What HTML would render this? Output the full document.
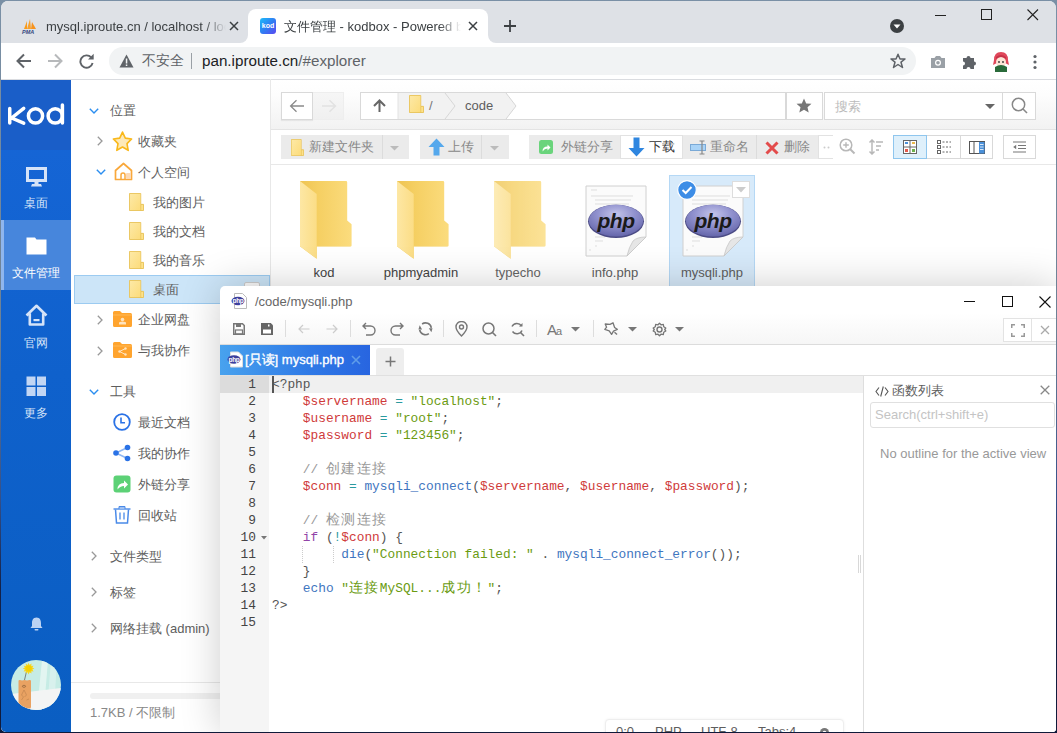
<!DOCTYPE html>
<html><head><meta charset="utf-8">
<style>
*{box-sizing:border-box;margin:0;padding:0}
html,body{width:1057px;height:733px;overflow:hidden;background:linear-gradient(#7a90a6,#6d8195 45%,#34508a 68%,#14224a 80%,#101a3a 100%)}
body{font-family:"Liberation Sans",sans-serif;position:relative;color:#333}
.abs{position:absolute}
#win{position:absolute;left:1px;top:1px;width:1055px;height:731px;background:#fff;border-radius:7px 7px 4px 5px;overflow:hidden}
#tabstrip{position:absolute;left:0;top:0;width:1055px;height:42px;background:#dee1e6}
.tab{position:absolute;top:8px;height:34px;font-size:13px;color:#3c4043;white-space:nowrap}
.fade{-webkit-mask-image:linear-gradient(90deg,#000 calc(100% - 22px),transparent 100%);mask-image:linear-gradient(90deg,#000 calc(100% - 22px),transparent 100%)}
#tab2{left:247px;width:240px;background:#fff;border-radius:8px 8px 0 0}
#toolbar{position:absolute;left:0;top:42px;width:1055px;height:37px;background:#fff;border-bottom:1px solid #dadce0}
#omni{position:absolute;left:108px;top:4px;width:807px;height:28px;background:#f1f3f4;border-radius:14px}
#app{position:absolute;left:0;top:79px;width:1055px;height:652px;background:#fff}
#nav{position:absolute;left:0;top:0;width:70px;height:652px;background:linear-gradient(#1766d8,#0f61cc 45%,#0a5ec2)}
.navi{position:absolute;left:0;width:70px;height:70px;color:#d5e3f8;font-size:12px;text-align:center}
.navi span{position:absolute;left:0;width:70px;top:46px;line-height:14px}
#tree{position:absolute;left:70px;top:-1px;width:200px;height:653px;background:transparent;border-right:1px solid #e8e8e8}
.tr{position:absolute;left:0;width:199px;height:29px;font-size:13px;color:#5e5e5e;line-height:29px;white-space:nowrap}
.tr .t{position:absolute;top:0}
.chev{position:absolute;top:0;width:10px;height:29px}

#dlg{position:absolute;left:219px;top:285px;width:837px;height:447px;background:#fff;border-radius:5px 0 0 0;box-shadow:0 0 40px rgba(0,0,0,0.2)}
.code{position:absolute;left:52px;font-family:"Liberation Mono",monospace;font-size:12.83px;line-height:17px;white-space:pre;color:#555}
.ln{position:absolute;left:0;width:36px;text-align:right;font-family:"Liberation Mono",monospace;font-size:12.83px;line-height:17px;color:#444}
.cj{font-size:14px;letter-spacing:1.4px}
.v{color:#cf3a3a}.o{color:#2b9a9f}.st{color:#6b9b12}.cm{color:#999}.f{color:#3f76c0}.k{color:#9244a8}
.ico{position:absolute}
</style></head><body>
<div id="win">
  <div id="tabstrip">
    <div class="abs" style="left:239px;top:34px;width:8px;height:8px;background:#fff"></div>
    <div class="abs" style="left:231px;top:26px;width:16px;height:16px;background:#dee1e6;border-radius:0 0 8px 0"></div>
    <div class="abs" style="left:487px;top:34px;width:8px;height:8px;background:#fff"></div>
    <div class="abs" style="left:487px;top:26px;width:16px;height:16px;background:#dee1e6;border-radius:0 0 0 8px"></div>
    <div class="tab" style="left:8px;width:238px">
      <svg class="abs" style="left:12px;top:10px" width="17" height="15" viewBox="0 0 17 15">
        <path d="M3 10 L6 2 L6 10Z" fill="#f89c1c"/><path d="M6 10 L9 0 L10 10Z" fill="#f8a12d"/><path d="M10 10 L11 3 L15 10Z" fill="#f7931e"/>
        <text x="1" y="14.5" font-size="5.5" font-weight="bold" font-style="italic" fill="#34477e" font-family="Liberation Sans">PMA</text>
      </svg>
      <span class="abs fade" style="left:37px;top:9.5px;width:180px;overflow:hidden">mysql.iproute.cn / localhost / localhost</span>
      <svg class="abs" style="left:219.5px;top:12px" width="10" height="10" viewBox="0 0 10 10"><path d="M1 1L9 9M9 1L1 9" stroke="#3c4043" stroke-width="1.5"/></svg>
    </div>
    <div class="tab" id="tab2">
      <div class="abs" style="left:12px;top:9px;width:16px;height:16px;border-radius:3px;background:linear-gradient(135deg,#1ebcf9,#2f7ef3 50%,#5a48f0);color:#fff;font-size:7px;font-weight:bold;line-height:16px;text-align:center">kod</div>
      <span class="abs fade" style="left:36px;top:9.5px;width:177px;overflow:hidden"><span style="font-size:12.5px">文件管理</span> - kodbox - Powered by kodcloud</span>
      <svg class="abs" style="left:219.5px;top:12px" width="10" height="10" viewBox="0 0 10 10"><path d="M1 1L9 9M9 1L1 9" stroke="#3c4043" stroke-width="1.5"/></svg>
    </div>
    <svg class="abs" style="left:502px;top:18px" width="14" height="14" viewBox="0 0 14 14"><path d="M7 1V13M1 7H13" stroke="#3c4043" stroke-width="1.8"/></svg>
    <svg class="abs" style="left:888px;top:17px" width="16" height="16" viewBox="0 0 16 16"><circle cx="8" cy="8" r="7" fill="#3c4043"/><path d="M4.5 6.5H11.5L8 10.5Z" fill="#fff"/></svg>
    <svg class="abs" style="left:934px;top:14px" width="12" height="2"><rect width="11" height="1" fill="#222"/></svg>
    <svg class="abs" style="left:980px;top:8px" width="12" height="12"><rect x="0.5" y="0.5" width="10" height="10" fill="none" stroke="#222"/></svg>
    <svg class="abs" style="left:1026px;top:8px" width="12" height="12" viewBox="0 0 12 12"><path d="M0.5 0.5L11 11M11 0.5L0.5 11" stroke="#222" stroke-width="1.1"/></svg>
  </div>
  <div id="toolbar">
    <svg class="abs" style="left:14.5px;top:10px" width="16" height="16" viewBox="0 0 16 16"><path d="M15 8H2M8 1.5L1.5 8L8 14.5" fill="none" stroke="#5f6368" stroke-width="2"/></svg>
    <svg class="abs" style="left:46px;top:10px" width="16" height="16" viewBox="0 0 16 16"><path d="M1 8H14M8 1.5L14.5 8L8 14.5" fill="none" stroke="#b7b9bb" stroke-width="2"/></svg>
    <svg class="abs" style="left:78px;top:9px" width="17" height="17" viewBox="0 0 17 17"><path d="M12.2 5.4A6.2 6.2 0 1 0 13.6 11.1" fill="none" stroke="#5f6368" stroke-width="1.9"/><path d="M9 7.5H14.7V1.8Z" fill="#5f6368"/></svg>
    <div id="omni">
      <svg class="abs" style="left:10px;top:7px" width="15" height="14" viewBox="0 0 15 14"><path d="M7.5 0.5L14.5 13.5H0.5Z" fill="#5f6368"/><rect x="6.8" y="4.5" width="1.5" height="5" fill="#f1f3f4"/><rect x="6.8" y="10.5" width="1.5" height="1.5" fill="#f1f3f4"/></svg>
      <span class="abs" style="left:33px;top:5px;font-size:14px;color:#5f6368">不安全</span>
      <div class="abs" style="left:82px;top:6px;width:1px;height:16px;background:#9aa0a6"></div>
      <span class="abs" style="left:93px;top:5px;font-size:15.2px;color:#202124">pan.iproute.cn<span style="color:#5f6368">/#explorer</span></span>
      <svg class="abs" style="left:781px;top:6px" width="16" height="16" viewBox="0 0 16 16"><path d="M8 1.2L10 6H15L11 9.2L12.5 14.5L8 11.5L3.5 14.5L5 9.2L1 6H6Z" fill="none" stroke="#5f6368" stroke-width="1.5" stroke-linejoin="round"/></svg>
    </div>
    <svg class="abs" style="left:929px;top:11px" width="16" height="15" viewBox="0 0 16 15"><path d="M1 4H4.5L6 2H10L11.5 4H15V14H1Z" fill="#9aa0a6"/><circle cx="8" cy="8.8" r="3" fill="#fff"/><circle cx="8" cy="8.8" r="1.8" fill="#9aa0a6"/></svg>
    <svg class="abs" style="left:960px;top:10px" width="17" height="17" viewBox="0 0 17 17"><path d="M2 5H5.5A2 2 0 1 1 9.5 5H13V8.5A2 2 0 1 1 13 12.5V16H9.5A2 2 0 1 0 5.5 16H2V12.5A2 2 0 1 0 2 8.5Z" fill="#5f6368"/></svg>
    <div class="abs" style="left:990px;top:8px;width:20px;height:21px">
      <svg width="20" height="21" viewBox="0 0 20 21"><path d="M3 9Q3 1 10 1Q17 1 17 9L18 14L14 12L6 12L2 14Z" fill="#e0475a"/><circle cx="10" cy="11" r="5" fill="#fde5d6"/><path d="M4 16Q10 12 16 16L16 21H4Z" fill="#2a6b3a"/><path d="M5 8Q10 4 15 8L15 6Q10 2 5 6Z" fill="#c73248"/><circle cx="8" cy="11" r="0.9" fill="#333"/><circle cx="12" cy="11" r="0.9" fill="#333"/></svg>
    </div>
    <svg class="abs" style="left:1031.5px;top:11px" width="4" height="16" viewBox="0 0 4 16"><circle cx="2" cy="2.5" r="1.6" fill="#5f6368"/><circle cx="2" cy="8" r="1.6" fill="#5f6368"/><circle cx="2" cy="13.5" r="1.6" fill="#5f6368"/></svg>
  </div>

  <div id="app">
    <div id="nav">
      <div class="abs" style="left:0;top:0;width:70px;height:70px;background:#1a5ec8"></div>
      <svg class="abs" style="left:7px;top:23px" width="58" height="24" viewBox="0 0 58 24">
        <path d="M1.75 5.6V20M15.7 5.4L3.6 15L15.7 20.2" fill="none" stroke="#fff" stroke-width="3.5" stroke-linecap="round" stroke-linejoin="round"/>
        <circle cx="27.5" cy="12.9" r="7.1" fill="none" stroke="#fff" stroke-width="3.5"/>
        <circle cx="47.2" cy="12.9" r="7.1" fill="none" stroke="#fff" stroke-width="3.5"/>
        <path d="M54.4 1.9V20" stroke="#fff" stroke-width="3.5" stroke-linecap="round"/>
      </svg>
      <div class="navi" style="top:70px">
        <svg class="abs" style="left:25px;top:17px" width="21" height="20" viewBox="0 0 21 20"><rect x="1.5" y="1.5" width="18" height="12" fill="none" stroke="#d5e3f8" stroke-width="3"/><rect x="8.5" y="14" width="4" height="3" fill="#d5e3f8"/><path d="M6 17H15L16 19.5H5Z" fill="#d5e3f8"/></svg>
        <span>桌面</span>
      </div>
      <div class="navi" style="top:140px;background:#4786dc;color:#fff">
        <div class="abs" style="left:0;top:0;width:3px;height:70px;background:#8fb6ee"></div>
        <svg class="abs" style="left:25px;top:17px" width="21" height="18" viewBox="0 0 21 18"><path d="M0.5 0.5H9L10.5 2.5H20.5V17.5H0.5Z" fill="#fff"/></svg>
        <span style="color:#fff">文件管理</span>
      </div>
      <div class="navi" style="top:210px">
        <svg class="abs" style="left:24px;top:14px" width="23" height="22" viewBox="0 0 23 22"><path d="M1.5 11.5L11.5 1.8L21.5 11.5M4.8 9.5V20.5H18.2V9.5" fill="none" stroke="#d5e3f8" stroke-width="2.6" stroke-linejoin="round"/><rect x="8.5" y="15" width="6" height="2.2" fill="#d5e3f8"/></svg>
        <span>官网</span>
      </div>
      <div class="navi" style="top:280px">
        <svg class="abs" style="left:25px;top:16px" width="21" height="21" viewBox="0 0 21 21"><rect x="0.5" y="0.5" width="9" height="9" fill="#c2d6f4"/><rect x="11" y="0.5" width="9" height="9" fill="#c2d6f4"/><rect x="0.5" y="11" width="9" height="9" fill="#c2d6f4"/><rect x="11" y="11" width="9" height="9" fill="#c2d6f4"/></svg>
        <span>更多</span>
      </div>
      <svg class="abs" style="left:28.5px;top:537px" width="13" height="14" viewBox="0 0 13 14"><path d="M6.5 0.5C3 0.5 2 3.5 2 6V9L0.5 11H12.5L11 9V6C11 3.5 10 0.5 6.5 0.5Z" fill="#bcd3f3"/><rect x="4.5" y="12" width="4" height="1.6" rx="0.8" fill="#bcd3f3"/></svg>
      <div class="abs" style="left:10px;top:580px;width:50px;height:50px;border-radius:50%;overflow:hidden;background:#c6ece5">
        <svg width="50" height="50" viewBox="0 0 50 50"><path d="M31 0H37L33 50H26Z" fill="#e4f6f2" opacity="0.9"/><path d="M40 0H46L43 50H36Z" fill="#dcf3ef" opacity="0.8"/><path d="M0 34L50 28V50H0Z" fill="#f3f4f4"/><path d="M15.5 11.5L13.5 20" stroke="#555" stroke-width="0.7"/><path d="M23.40 8.60L21.27 9.58L22.62 11.50L20.29 11.29L20.50 13.62L18.58 12.27L17.60 14.40L16.62 12.27L14.70 13.62L14.91 11.29L12.58 11.50L13.93 9.58L11.80 8.60L13.93 7.62L12.58 5.70L14.91 5.91L14.70 3.58L16.62 4.93L17.60 2.80L18.58 4.93L20.50 3.58L20.29 5.91L22.62 5.70L21.27 7.62Z" fill="#f7d51c"/><circle cx="17.6" cy="8.6" r="3" fill="#f4cf00"/><path d="M7.5 21Q7.5 19.8 9 20L11 20.6L13.5 20L16 20.6L18.5 20Q20 19.8 20 21V47Q20 48.5 18.5 48.5H9Q7.5 48.5 7.5 47Z" fill="#e9a262"/><ellipse cx="13" cy="26.3" rx="1.6" ry="1" fill="none" stroke="#7a5636" stroke-width="0.6"/><path d="M13 30L10.5 35L12.5 37L10.5 40M13 30L15.5 35L13.5 37M15.5 40L18 39" fill="none" stroke="#b37a48" stroke-width="0.5"/></svg>
      </div>
    </div>


    <div id="main" class="abs" style="left:269px;top:0;width:786px;height:652px;background:#fff">
      <svg width="0" height="0" class="abs"><defs>
        <linearGradient id="fback" x1="0" y1="0" x2="1" y2="0"><stop offset="0" stop-color="#eec453"/><stop offset="0.35" stop-color="#f5cf62"/><stop offset="1" stop-color="#fbdc7e"/></linearGradient>
        <linearGradient id="fflap" x1="0" y1="0" x2="1" y2="0"><stop offset="0" stop-color="#fde7a4"/><stop offset="1" stop-color="#fbdd86"/></linearGradient>
        <radialGradient id="pel" cx="0.5" cy="0.3" r="0.75"><stop offset="0" stop-color="#c4c5ea"/><stop offset="0.45" stop-color="#9293cf"/><stop offset="1" stop-color="#5f60a6"/></radialGradient>
        <symbol id="folder" viewBox="0 0 52 78"><path d="M0 0H46Q47.2 0 47.2 1.2V39.5L51.6 43.3V64.6Q51.6 65.6 50.6 65.6H16.7V77.8L0 65.3Z" fill="url(#fback)"/><path d="M0 0L16.7 13.1V77.8L0 65.3Z" fill="url(#fflap)"/><path d="M16.7 65.6H50.6" stroke="#f0d27a" stroke-width="0.6" opacity="0.5"/></symbol>
        <symbol id="phpfile" viewBox="0 0 62 72">
          <path d="M1 1H61V52L42 71H1Z" fill="#fbfbfb" stroke="#d0d0d0" stroke-width="1"/>
          <path d="M61 52Q52 52 48 56Q44 62 42 71Z" fill="#e6e6e6" stroke="#c8c8c8" stroke-width="0.8"/>
          <g stroke="#d2d2d2" stroke-width="0.7"><path d="M6 5H12"/><path d="M6 11H48"/><path d="M10 15H46"/><path d="M10 19H44"/><path d="M10 52H20"/><path d="M10 56H18"/><path d="M10 61H12"/><path d="M4 65H6"/></g>
          <ellipse cx="31" cy="36.3" rx="28" ry="16.6" fill="#4b4b85"/>
          <ellipse cx="31" cy="35.6" rx="27.2" ry="15.8" fill="url(#pel)"/>
          
          <text x="31" y="42.5" text-anchor="middle" font-family="Liberation Sans" font-weight="bold" font-style="italic" font-size="21" fill="#1a1a1a" letter-spacing="-0.5">php</text>
        </symbol>
      </defs></svg>
      <!-- header -->
      <div class="abs" style="left:0;top:0;width:786px;height:50px;background:linear-gradient(#fff 0,#fdfdfd 15px,#f2f2f2 49px);border-bottom:1px solid #e4e4e4"></div>
      <div class="abs" style="left:11px;top:12px;width:32px;height:28px;background:#fff;border:1px solid #d9d9d9;box-shadow:0 1px 1px rgba(0,0,0,0.06)"></div>
      <svg class="abs" style="left:19px;top:19px" width="16" height="14" viewBox="0 0 16 14"><path d="M15 7H2M7.5 1.2L1.6 7L7.5 12.8" fill="none" stroke="#8a8a8a" stroke-width="1.3"/></svg>
      <div class="abs" style="left:43px;top:12px;width:31px;height:28px;background:linear-gradient(#f6f6f6,#f0f0f0);border:1px solid #eeeeee;border-left:none"></div>
      <svg class="abs" style="left:51px;top:19px" width="16" height="14" viewBox="0 0 16 14"><path d="M1 7H14M8.5 1.2L14.4 7L8.5 12.8" fill="none" stroke="#e2e2e2" stroke-width="1.5"/></svg>

      <div class="abs" style="left:90px;top:12px;width:426px;height:28px;background:#fff;border:1px solid #d9d9d9"></div>
      <svg class="abs" style="left:91px;top:13px" width="425" height="26" viewBox="0 0 425 26">
        <path d="M37 0H84L94 13L84 26H37Z" fill="#f2f2f2"/>
        <path d="M84 0H145L155 13L145 26H84L94 13Z" fill="#f2f2f2"/>
        <path d="M37 0V26" stroke="#e2e2e2"/>
        <path d="M84 0L94 13L84 26" fill="none" stroke="#d6d6d6"/>
        <path d="M145 0L155 13L145 26" fill="none" stroke="#d6d6d6"/>
      </svg>
      <svg class="abs" style="left:103px;top:19px" width="13" height="13" viewBox="0 0 13 13"><path d="M6.5 13V1.5M1 7L6.5 1.5L12 7" fill="none" stroke="#666" stroke-width="2"/></svg>
      <svg class="abs" style="left:139px;top:15px" width="15" height="18" viewBox="0 0 16 19" preserveAspectRatio="none"><path d="M0.5 0.5H12.5V12H15.5V18.5H0.5Z" fill="#fde28a" stroke="#e8c258" stroke-width="1"/><path d="M12.5 12V18.5" stroke="#e8c258" stroke-width="1"/><rect x="1" y="1" width="11" height="17" fill="url(#fg)"/></svg>
      <span class="abs" style="left:159px;top:18px;font-size:13px;color:#777">/</span>
      <span class="abs" style="left:195px;top:18px;font-size:13px;color:#5e5e5e">code</span>

      <div class="abs" style="left:516px;top:12px;width:37px;height:28px;background:#fff;border:1px solid #d9d9d9"></div>
      <svg class="abs" style="left:526px;top:18px" width="16" height="15" viewBox="0 0 16 15"><path d="M8 0.5L10.2 5.4L15.5 5.8L11.5 9.3L12.7 14.5L8 11.8L3.3 14.5L4.5 9.3L0.5 5.8L5.8 5.4Z" fill="#777"/></svg>
      <div class="abs" style="left:554px;top:12px;width:212px;height:28px;background:#fff;border:1px solid #d9d9d9"></div>
      <div class="abs" style="left:732px;top:12px;width:34px;height:28px;border-left:1px solid #d9d9d9"></div>
      <span class="abs" style="left:565px;top:18px;font-size:13px;color:#bbb">搜索</span>
      <svg class="abs" style="left:715px;top:24px" width="10" height="5" viewBox="0 0 10 5"><path d="M0 0H10L5 5Z" fill="#666"/></svg>
      <svg class="abs" style="left:741px;top:17px" width="17" height="17" viewBox="0 0 17 17"><circle cx="7.5" cy="7.5" r="6.2" fill="none" stroke="#888" stroke-width="1.5"/><path d="M12 12L16 16" stroke="#888" stroke-width="1.6"/></svg>

      <!-- toolbar -->
      <div class="abs" style="left:0;top:84px;width:786px;height:1px;background:#e8e8e8"></div>
      <div class="abs" style="left:11px;top:55px;width:128px;height:24px;background:#ebebeb"></div>
      <div class="abs" style="left:112px;top:55px;width:1px;height:24px;background:#dcdcdc"></div>
      <svg class="abs" style="left:21px;top:59px" width="13" height="17" viewBox="0 0 16 19" preserveAspectRatio="none"><path d="M0.5 0.5H12.5V12H15.5V18.5H0.5Z" fill="#fde28a" stroke="#e8c258" stroke-width="1"/><path d="M12.5 12V18.5" stroke="#e8c258" stroke-width="1"/><rect x="1" y="1" width="11" height="17" fill="url(#fg)"/></svg>
      <span class="abs" style="left:39px;top:58px;font-size:13px;color:#888">新建文件夹</span>
      <svg class="abs" style="left:120px;top:66px" width="9" height="5" viewBox="0 0 9 5"><path d="M0 0H9L4.5 4.5Z" fill="#bbb"/></svg>

      <div class="abs" style="left:150px;top:55px;width:89px;height:24px;background:#ebebeb"></div>
      <div class="abs" style="left:211px;top:55px;width:1px;height:24px;background:#dcdcdc"></div>
      <svg class="abs" style="left:158px;top:58px" width="17" height="18" viewBox="0 0 17 18"><path d="M8.5 0.5L16.5 9H11.5V17.5H5.5V9H0.5Z" fill="#55a8ec"/></svg>
      <span class="abs" style="left:178px;top:58px;font-size:13px;color:#888">上传</span>
      <svg class="abs" style="left:220px;top:66px" width="9" height="5" viewBox="0 0 9 5"><path d="M0 0H9L4.5 4.5Z" fill="#bbb"/></svg>

      <div class="abs" style="left:259px;top:55px;width:303px;height:24px;background:#ebebeb"></div>
      <svg class="abs" style="left:269px;top:60px" width="14" height="14" viewBox="0 0 14 14"><rect x="0" y="0" width="14" height="14" rx="2.5" fill="#6ad47c"/><path d="M3.5 11.5Q3.5 6.5 8.5 6.5V4.5L11.5 7.5L8.5 10.5V8.5Q5.5 8.5 3.5 11.5Z" fill="#fff"/></svg>
      <span class="abs" style="left:291px;top:58px;font-size:13px;color:#888">外链分享</span>
      <div class="abs" style="left:350px;top:55px;width:63px;height:24px;background:#fff;border:1px solid #e2e2e2"></div>
      <svg class="abs" style="left:358px;top:57px" width="17" height="20" viewBox="0 0 17 20"><path d="M8.5 19.5L16.5 11H11.5V0.5H5.5V11H0.5Z" fill="#2f86e0"/></svg>
      <span class="abs" style="left:379px;top:58px;font-size:13px;color:#333">下载</span>
      <svg class="abs" style="left:420px;top:60px" width="20" height="15" viewBox="0 0 20 15"><rect x="0.5" y="4.5" width="15" height="6" fill="#a9d3f7" stroke="#7aa9d6"/><path d="M12 1V14M9.5 1H14.5M9.5 14H14.5" stroke="#888" stroke-width="1.2"/></svg>
      <span class="abs" style="left:440px;top:58px;font-size:13px;color:#888">重命名</span>
      <div class="abs" style="left:486px;top:55px;width:1px;height:24px;background:#dcdcdc"></div>
      <svg class="abs" style="left:495px;top:61px" width="14" height="14" viewBox="0 0 14 14"><path d="M1.5 1.5L12.5 12.5M12.5 1.5L1.5 12.5" stroke="#e34b4b" stroke-width="3"/></svg>
      <span class="abs" style="left:514px;top:58px;font-size:13px;color:#888">删除</span>
      <div class="abs" style="left:548px;top:55px;width:15px;height:24px;background:#fff;border:1px solid #e2e2e2;border-right:none"></div>
      <svg class="abs" style="left:553px;top:66px" width="8" height="3"><circle cx="1.5" cy="1.5" r="1" fill="#ccc"/><circle cx="5.5" cy="1.5" r="1" fill="#ccc"/></svg>

      <svg class="abs" style="left:569px;top:58px" width="17" height="17" viewBox="0 0 17 17"><circle cx="7" cy="7" r="5.8" fill="none" stroke="#b8b8b8" stroke-width="1.5"/><path d="M11 11L15.5 15.5" stroke="#b8b8b8" stroke-width="2"/><path d="M4.2 7H9.8M7 4.2V9.8" stroke="#b8b8b8" stroke-width="1.4"/></svg>
      <svg class="abs" style="left:598px;top:59px" width="16" height="16" viewBox="0 0 16 16"><path d="M4 1V15M1.5 3.5L4 1L6.5 3.5M1.5 12.5L4 15L6.5 12.5" fill="none" stroke="#b8b8b8" stroke-width="1.5"/><path d="M8 3H15M8 7H13M8 11H11" stroke="#b8b8b8" stroke-width="1.5"/></svg>

      <div class="abs" style="left:623px;top:55px;width:100px;height:24px;background:#fff;border:1px solid #d9d9d9"></div>
      <div class="abs" style="left:623px;top:55px;width:34px;height:24px;background:#dff0fb;border:1px solid #8fc6ee"></div>
      <div class="abs" style="left:690px;top:55px;width:1px;height:24px;background:#d9d9d9"></div>
      <svg class="abs" style="left:633px;top:60px" width="14" height="14" viewBox="0 0 14 14"><rect x="0.5" y="0.5" width="13" height="13" fill="#fff" stroke="#666"/><path d="M7 0.5V13.5M0.5 7H13.5" stroke="#666"/><rect x="2" y="2" width="3" height="2" fill="#4a90d9"/><rect x="9" y="2" width="3" height="2" fill="#e9b84a"/><rect x="2" y="9" width="3" height="3" fill="#e2584a"/><rect x="9" y="9" width="3" height="3" fill="#6ab04c"/></svg>
      <svg class="abs" style="left:667px;top:60px" width="14" height="15" viewBox="0 0 14 15"><g fill="none" stroke="#666"><rect x="0.5" y="0.5" width="3" height="3"/><rect x="0.5" y="5.5" width="3" height="3"/><rect x="0.5" y="10.5" width="3" height="3"/></g><path d="M5.5 2H7.5M9 2H11M12.5 2H14M5.5 7H7.5M9 7H11M12.5 7H14M5.5 12H7.5M9 12H11M12.5 12H14" stroke="#666"/></svg>
      <svg class="abs" style="left:699px;top:61px" width="16" height="13" viewBox="0 0 16 13"><rect x="0.5" y="0.5" width="15" height="12" fill="#fff" stroke="#555"/><path d="M5 0.5V12.5" stroke="#555"/><rect x="10" y="1" width="5.5" height="11.5" fill="#4a90d9"/><path d="M11 3.5H14.5M11 6H14.5M11 8.5H14.5" stroke="#fff" stroke-width="0.8"/></svg>

      <div class="abs" style="left:733px;top:55px;width:33px;height:24px;background:#fff;border:1px solid #d9d9d9"></div>
      <svg class="abs" style="left:742px;top:61px" width="15" height="12" viewBox="0 0 15 12"><path d="M1 1H14M6 4.5H14M6 7.5H14M1 11H14" stroke="#777" stroke-width="1.2"/><path d="M4.2 3.8L1.2 6L4.2 8.2Z" fill="#777"/></svg>

      <!-- files -->
      <div class="abs" style="left:399px;top:95px;width:86px;height:115px;background:#d7eafa;border:1px solid #b5d8f5"></div>
      <svg class="abs" style="left:30px;top:101px;" width="52" height="78"><use href="#folder"/></svg>
      <div class="abs" style="left:4px;top:185px;width:100px;text-align:center;font-size:13px;color:#444">kod</div>
      <svg class="abs" style="left:127px;top:101px;" width="52" height="78"><use href="#folder"/></svg>
      <div class="abs" style="left:101px;top:185px;width:100px;text-align:center;font-size:13px;color:#444">phpmyadmin</div>
      <svg class="abs" style="left:224px;top:101px; opacity:0.8;" width="52" height="78"><use href="#folder"/></svg>
      <div class="abs" style="left:198px;top:185px;width:100px;text-align:center;font-size:13px;color:#666">typecho</div>
      <svg class="abs" style="left:315px;top:105px" width="62" height="72"><use href="#phpfile"/></svg>
      <div class="abs" style="left:295px;top:185px;width:100px;text-align:center;font-size:13px;color:#5e5e5e">info.php</div>
      <svg class="abs" style="left:412px;top:105px" width="62" height="72"><use href="#phpfile"/></svg>
      <div class="abs" style="left:392px;top:185px;width:100px;text-align:center;font-size:13px;color:#5e5e5e">mysqli.php</div>
      <svg class="abs" style="left:407px;top:100px" width="20" height="20" viewBox="0 0 20 20"><circle cx="10" cy="10" r="9.3" fill="#3d8de6" stroke="#fff" stroke-width="1.2"/><path d="M5.5 10L8.7 13L14.5 7" fill="none" stroke="#fff" stroke-width="2"/></svg>
      <div class="abs" style="left:462px;top:101px;width:18px;height:17px;background:#fff;border:1px solid #ddd"></div>
      <svg class="abs" style="left:466px;top:107px" width="10" height="6" viewBox="0 0 10 6"><path d="M0 0H10L5 5.5Z" fill="#ccc"/></svg>
    </div>
    <div id="tree">
      <svg class="abs" style="left:17.5px;top:28.5px" width="10" height="6" viewBox="0 0 10 6"><path d="M0.8 0.8L5 5L9.2 0.8" fill="none" stroke="#2b8ef0" stroke-width="1.4"/></svg>
      <span class="abs" style="left:39px;top:23px;font-size:13px;color:#5e5e5e">位置</span>
      <svg class="abs" style="left:26px;top:57px" width="6" height="10" viewBox="0 0 6 10"><path d="M0.8 0.8L5 5L0.8 9.2" fill="none" stroke="#999" stroke-width="1.3"/></svg>
      <svg class="abs" style="left:40.5px;top:51.5px" width="21" height="21" viewBox="0 0 21 20" preserveAspectRatio="none"><path d="M10.5 1L13.3 6.8L19.6 7.6L15 12L16.2 18.4L10.5 15.3L4.8 18.4L6 12L1.4 7.6L7.7 6.8Z" fill="#fde9b8" stroke="#f9b81a" stroke-width="1.6" stroke-linejoin="round"/></svg>
      <span class="abs" style="left:67px;top:54px;font-size:13px;color:#5e5e5e">收藏夹</span>
      <svg class="abs" style="left:24.5px;top:89.5px" width="10" height="6" viewBox="0 0 10 6"><path d="M0.8 0.8L5 5L9.2 0.8" fill="none" stroke="#2b8ef0" stroke-width="1.4"/></svg>
      <svg class="abs" style="left:43px;top:83px" width="19" height="19" viewBox="0 0 19 19"><path d="M1.5 8.5L9.5 1.5L17.5 8.5V17.5H1.5Z" fill="none" stroke="#f9a83b" stroke-width="1.7" stroke-linejoin="round"/><path d="M7 17.5V13A2 2 0 0 1 11 13V17.5" fill="none" stroke="#f9a83b" stroke-width="1.5"/><rect x="12" y="11" width="5" height="6" rx="1" fill="#fcd9b5"/></svg>
      <span class="abs" style="left:67px;top:85px;font-size:13px;color:#5e5e5e">个人空间</span>
      <div class="abs" style="left:3px;top:196px;width:196px;height:29px;background:#cce5f8;border:1px solid #9ccbf1"></div>
      <div class="abs" style="left:173px;top:203px;width:16px;height:12px;background:#fafafa;border:1px solid #ccc;border-radius:2px"></div>
      <svg width="0" height="0" class="abs"><defs><linearGradient id="fg" x1="0" y1="0" x2="1" y2="1"><stop offset="0" stop-color="#fde9a6"/><stop offset="1" stop-color="#fcdc7c"/></linearGradient></defs></svg>
      <svg class="abs" style="left:58px;top:114px" width="15" height="18" viewBox="0 0 16 19" preserveAspectRatio="none"><path d="M0.5 0.5H12.5V12H15.5V18.5H0.5Z" fill="#fde28a" stroke="#e8c258" stroke-width="1"/><path d="M12.5 12V18.5" stroke="#e8c258" stroke-width="1"/><rect x="1" y="1" width="11" height="17" fill="url(#fg)"/></svg>
      <span class="abs" style="left:82px;top:115px;font-size:13px;color:#5e5e5e">我的图片</span>
      <svg class="abs" style="left:58px;top:143px" width="15" height="18" viewBox="0 0 16 19" preserveAspectRatio="none"><path d="M0.5 0.5H12.5V12H15.5V18.5H0.5Z" fill="#fde28a" stroke="#e8c258" stroke-width="1"/><path d="M12.5 12V18.5" stroke="#e8c258" stroke-width="1"/><rect x="1" y="1" width="11" height="17" fill="url(#fg)"/></svg>
      <span class="abs" style="left:82px;top:144px;font-size:13px;color:#5e5e5e">我的文档</span>
      <svg class="abs" style="left:58px;top:172px" width="15" height="18" viewBox="0 0 16 19" preserveAspectRatio="none"><path d="M0.5 0.5H12.5V12H15.5V18.5H0.5Z" fill="#fde28a" stroke="#e8c258" stroke-width="1"/><path d="M12.5 12V18.5" stroke="#e8c258" stroke-width="1"/><rect x="1" y="1" width="11" height="17" fill="url(#fg)"/></svg>
      <span class="abs" style="left:82px;top:173px;font-size:13px;color:#5e5e5e">我的音乐</span>
      <svg class="abs" style="left:58px;top:201px" width="15" height="18" viewBox="0 0 16 19" preserveAspectRatio="none"><path d="M0.5 0.5H12.5V12H15.5V18.5H0.5Z" fill="#fde28a" stroke="#e8c258" stroke-width="1"/><path d="M12.5 12V18.5" stroke="#e8c258" stroke-width="1"/><rect x="1" y="1" width="11" height="17" fill="url(#fg)"/></svg>
      <span class="abs" style="left:82px;top:202px;font-size:13px;color:#5e5e5e">桌面</span>

      <svg class="abs" style="left:26px;top:235.5px" width="6" height="10" viewBox="0 0 6 10"><path d="M0.8 0.8L5 5L0.8 9.2" fill="none" stroke="#999" stroke-width="1.3"/></svg>
      <svg class="abs" style="left:42px;top:232px" width="19" height="16" viewBox="0 0 19 16"><path d="M0 1.5Q0 0 1.5 0H7L9 2H17.5Q19 2 19 3.5V14.5Q19 16 17.5 16H1.5Q0 16 0 14.5Z" fill="#ffa42e"/><path d="M0 4H19" stroke="#ffbf63" stroke-width="0.8"/><circle cx="9.5" cy="8.5" r="1.8" fill="#ffe3bd"/><path d="M6 13.5H13V12Q13 10.5 9.5 10.5Q6 10.5 6 12Z" fill="#ffe3bd"/></svg>
      <span class="abs" style="left:67px;top:232px;font-size:13px;color:#5e5e5e">企业网盘</span>
      <svg class="abs" style="left:26px;top:266.5px" width="6" height="10" viewBox="0 0 6 10"><path d="M0.8 0.8L5 5L0.8 9.2" fill="none" stroke="#999" stroke-width="1.3"/></svg>
      <svg class="abs" style="left:42px;top:263px" width="19" height="16" viewBox="0 0 19 16"><path d="M0 1.5Q0 0 1.5 0H7L9 2H17.5Q19 2 19 3.5V14.5Q19 16 17.5 16H1.5Q0 16 0 14.5Z" fill="#ffa42e"/><path d="M0 4H19" stroke="#ffbf63" stroke-width="0.8"/><path d="M12.5 6.5L6.5 9.5L12.5 12.5" fill="none" stroke="#ffe3bd" stroke-width="1"/><circle cx="12.5" cy="6.5" r="1.2" fill="#ffe3bd"/><circle cx="6.5" cy="9.5" r="1.2" fill="#ffe3bd"/><circle cx="12.5" cy="12.5" r="1.2" fill="#ffe3bd"/></svg>
      <span class="abs" style="left:67px;top:263px;font-size:13px;color:#5e5e5e">与我协作</span>

      <svg class="abs" style="left:17.5px;top:309.5px" width="10" height="6" viewBox="0 0 10 6"><path d="M0.8 0.8L5 5L9.2 0.8" fill="none" stroke="#2b8ef0" stroke-width="1.4"/></svg>
      <span class="abs" style="left:39px;top:304px;font-size:13px;color:#5e5e5e">工具</span>
      <svg class="abs" style="left:42px;top:334px" width="18" height="18" viewBox="0 0 18 18"><circle cx="9" cy="9" r="7.8" fill="none" stroke="#2a72e6" stroke-width="1.8"/><path d="M8 4.5V9.8H12" fill="none" stroke="#2a72e6" stroke-width="1.6"/></svg>
      <span class="abs" style="left:67px;top:335px;font-size:13px;color:#5e5e5e">最近文档</span>
      <svg class="abs" style="left:42px;top:365px" width="18" height="18" viewBox="0 0 18 18"><path d="M3 9L14.5 3.5M3 9L14.5 14.5" stroke="#8fb7f2" stroke-width="1.5"/><circle cx="3" cy="9" r="2.8" fill="#2a72e6"/><circle cx="14.5" cy="3.5" r="2.8" fill="#2a72e6"/><circle cx="14.5" cy="14.5" r="2.8" fill="#2a72e6"/></svg>
      <span class="abs" style="left:67px;top:366px;font-size:13px;color:#5e5e5e">我的协作</span>
      <svg class="abs" style="left:42px;top:396px" width="18" height="18" viewBox="0 0 18 18"><rect x="0.5" y="0.5" width="17" height="17" rx="3" fill="#5cd176"/><path d="M4.5 14.5Q4.5 8 11 8V5.5L15 9.5L11 13.5V11Q7 11 4.5 14.5Z" fill="#fff"/></svg>
      <span class="abs" style="left:67px;top:397px;font-size:13px;color:#5e5e5e">外链分享</span>
      <svg class="abs" style="left:42px;top:426px" width="18" height="19" viewBox="0 0 18 19"><path d="M0.5 4H17.5" stroke="#4a8ae8" stroke-width="1.4"/><path d="M6 4V1.5H12V4" fill="#9ec0f2" stroke="#4a8ae8" stroke-width="1"/><path d="M2.5 4.5L3.5 18H14.5L15.5 4.5" fill="none" stroke="#4a8ae8" stroke-width="1.5"/><path d="M7 7.5V14.5M11 7.5V14.5" stroke="#4a8ae8" stroke-width="1.3"/></svg>
      <span class="abs" style="left:67px;top:428px;font-size:13px;color:#5e5e5e">回收站</span>

      <svg class="abs" style="left:20px;top:472px" width="6" height="10" viewBox="0 0 6 10"><path d="M0.8 0.8L5 5L0.8 9.2" fill="none" stroke="#999" stroke-width="1.3"/></svg>
      <span class="abs" style="left:39px;top:469px;font-size:13px;color:#5e5e5e">文件类型</span>
      <svg class="abs" style="left:20px;top:508px" width="6" height="10" viewBox="0 0 6 10"><path d="M0.8 0.8L5 5L0.8 9.2" fill="none" stroke="#999" stroke-width="1.3"/></svg>
      <span class="abs" style="left:39px;top:505px;font-size:13px;color:#5e5e5e">标签</span>
      <svg class="abs" style="left:20px;top:544px" width="6" height="10" viewBox="0 0 6 10"><path d="M0.8 0.8L5 5L0.8 9.2" fill="none" stroke="#999" stroke-width="1.3"/></svg>
      <span class="abs" style="left:39px;top:541px;font-size:13px;color:#5e5e5e">网络挂载 (admin)</span>

      <div class="abs" style="left:0;top:603px;width:199px;height:1px;background:#e8e8e8"></div>
      <div class="abs" style="left:19px;top:614px;width:180px;height:6px;border-radius:3px;background:#f0f0f0"></div>
      <span class="abs" style="left:19px;top:625px;font-size:13px;color:#888">1.7KB / 不限制</span>
    </div>
  </div>

  <div id="dlg">
    <svg class="ico" style="left:10.5px;top:7px" width="17" height="16" viewBox="0 0 17 16"><path d="M3.5 0.5H11.5L15.5 4.5V15.5H3.5Z" fill="#fff" stroke="#bbb"/><ellipse cx="7" cy="8" rx="6.5" ry="4.2" fill="#3d409c"/><text x="7" y="10.2" text-anchor="middle" font-size="6.5" font-weight="bold" fill="#fff" font-family="Liberation Sans" letter-spacing="-0.3">php</text></svg>
    <span class="abs" style="left:35px;top:8px;font-size:13px;color:#666">/code/mysqli.php</span>
    <div class="abs" style="left:744px;top:15px;width:11px;height:1px;background:#111"></div>
    <div class="abs" style="left:782px;top:10px;width:11px;height:11px;border:1px solid #111"></div>
    <svg class="ico" style="left:819px;top:10px" width="12" height="12" viewBox="0 0 12 12"><path d="M0.5 0.5L11.5 11.5M11.5 0.5L0.5 11.5" stroke="#111" stroke-width="1.1"/></svg>

    <div class="abs" style="left:0;top:27px;width:837px;height:32px;background:linear-gradient(#fff,#f6f6f6);border-bottom:1px solid #dcdcdc"></div>
    <svg class="ico" style="left:13px;top:37px" width="12" height="12" viewBox="0 0 12 12"><path d="M0.75 0.75H9.5L11.25 2.5V11.25H0.75Z" fill="none" stroke="#777" stroke-width="1.5"/><rect x="3" y="1" width="5" height="3" fill="#777"/><rect x="2.5" y="7" width="7" height="4" fill="none" stroke="#777" stroke-width="1.2"/></svg>
    <svg class="ico" style="left:41px;top:37px" width="12" height="12" viewBox="0 0 12 12"><path d="M0 0H9.8L12 2.2V12H0Z" fill="#666"/><rect x="2" y="6.5" width="8" height="4" fill="#fff"/><rect x="7" y="1.5" width="1.5" height="2" fill="#fff"/></svg>
    <div class="abs" style="left:65px;top:34px;width:1px;height:17px;background:#ddd"></div>
    <svg class="ico" style="left:78px;top:38px" width="12" height="10" viewBox="0 0 12 10"><path d="M11.5 5H1M5 1L1 5L5 9" fill="none" stroke="#ccc" stroke-width="1.2"/></svg>
    <svg class="ico" style="left:106px;top:38px" width="12" height="10" viewBox="0 0 12 10"><path d="M0.5 5H11M7 1L11 5L7 9" fill="none" stroke="#ccc" stroke-width="1.2"/></svg>
    <div class="abs" style="left:130px;top:34px;width:1px;height:17px;background:#ddd"></div>
    <svg class="ico" style="left:142px;top:36px" width="14" height="14" viewBox="0 0 14 14"><path d="M4 1L1 4L4 7M1 4H8.5A4.5 4.5 0 0 1 8.5 13H4" fill="none" stroke="#777" stroke-width="1.4"/></svg>
    <svg class="ico" style="left:170px;top:36px" width="14" height="14" viewBox="0 0 14 14"><path d="M10 1L13 4L10 7M13 4H5.5A4.5 4.5 0 0 0 5.5 13H10" fill="none" stroke="#777" stroke-width="1.4"/></svg>
    <svg class="ico" style="left:197px;top:36px" width="17" height="14" viewBox="0 0 16 14"><path d="M4.62 1.97A5.9 5.9 0 0 1 13.81 5.78M11.38 11.63A5.9 5.9 0 0 1 2.19 7.82" fill="none" stroke="#777" stroke-width="1.6"/><path d="M11.3 6.3L15 6.3L13.9 10.3Z" fill="#777"/><path d="M0.9 7.6L4.6 7.6L2.2 3.3Z" fill="#777"/></svg>
    <div class="abs" style="left:223px;top:34px;width:1px;height:17px;background:#ddd"></div>
    <svg class="ico" style="left:235px;top:35px" width="13" height="16" viewBox="0 0 13 16"><path d="M6.5 15S1 9.5 1 6A5.5 5.5 0 0 1 12 6C12 9.5 6.5 15 6.5 15Z" fill="none" stroke="#777" stroke-width="1.4"/><circle cx="6.5" cy="6" r="2" fill="none" stroke="#777" stroke-width="1.4"/></svg>
    <svg class="ico" style="left:262px;top:36px" width="15" height="15" viewBox="0 0 15 15"><circle cx="6.5" cy="6.5" r="5.5" fill="none" stroke="#777" stroke-width="1.5"/><path d="M10.5 10.5L14 14" stroke="#777" stroke-width="1.6"/></svg>
    <svg class="ico" style="left:290px;top:36px" width="15" height="15" viewBox="0 0 15 15"><path d="M2 4.5A5.5 5.5 0 0 1 11.5 4M12 8.5A5.5 5.5 0 0 1 2.5 9.5" fill="none" stroke="#777" stroke-width="1.5"/><path d="M9 4.5H12.5V1Z" fill="#777"/><path d="M10.5 10.5L14 14" stroke="#777" stroke-width="1.6"/></svg>
    <div class="abs" style="left:316px;top:34px;width:1px;height:17px;background:#ddd"></div>
    <span class="abs" style="left:327px;top:35px;font-size:15px;color:#777;letter-spacing:-1px">A<span style="font-size:11px">a</span></span>
    <svg class="ico" style="left:351px;top:41px" width="9" height="5" viewBox="0 0 9 5"><path d="M0 0H9L4.5 4.5Z" fill="#777"/></svg>
    <div class="abs" style="left:373px;top:34px;width:1px;height:17px;background:#ddd"></div>
    <svg class="ico" style="left:384px;top:36px" width="15" height="15" viewBox="0 0 15 15"><path d="M1.2 2L6 2.3L9 0.8L10.6 5.5L13.3 7.4L9.5 9.2L7.6 12.4L5.2 8.8L0.8 7.4L2.6 5.2Z" fill="none" stroke="#777" stroke-width="1.3" stroke-linejoin="round"/><path d="M10.5 10.3L13 12.6" stroke="#777" stroke-width="1.4"/></svg>
    <svg class="ico" style="left:408px;top:41px" width="9" height="5" viewBox="0 0 9 5"><path d="M0 0H9L4.5 4.5Z" fill="#777"/></svg>
    <svg class="ico" style="left:432px;top:36px" width="15" height="15" viewBox="0 0 15 15"><circle cx="7.5" cy="7.5" r="2.5" fill="none" stroke="#777" stroke-width="1.4"/><path d="M7.5 1.2L9 2.8L11.3 2.4L11.7 4.7L13.8 6L12.7 7.5L13.8 9L11.7 10.3L11.3 12.6L9 12.2L7.5 13.8L6 12.2L3.7 12.6L3.3 10.3L1.2 9L2.3 7.5L1.2 6L3.3 4.7L3.7 2.4L6 2.8Z" fill="none" stroke="#777" stroke-width="1.3" stroke-linejoin="round"/></svg>
    <svg class="ico" style="left:455px;top:41px" width="9" height="5" viewBox="0 0 9 5"><path d="M0 0H9L4.5 4.5Z" fill="#777"/></svg>
    <div class="abs" style="left:783px;top:32px;width:54px;height:24px;background:#fff;border:1px solid #e3e3e3;border-right:none"></div>
    <div class="abs" style="left:811px;top:32px;width:1px;height:24px;background:#e3e3e3"></div>
    <svg class="ico" style="left:791px;top:38px" width="14" height="13" viewBox="0 0 14 13"><path d="M0.75 4V0.75H4M10 0.75H13.25V4M13.25 9V12.25H10M4 12.25H0.75V9" fill="none" stroke="#999" stroke-width="1.5"/></svg>
    <svg class="ico" style="left:820px;top:39px" width="10" height="10" viewBox="0 0 10 10"><path d="M1 1L9 9M9 1L1 9" stroke="#aaa" stroke-width="1.3"/></svg>

    <!-- tabs -->
    <div class="abs" style="left:0;top:59px;width:150px;height:30px;background:linear-gradient(90deg,#48a2ee,#2f79e6 60%,#2865e0)"></div>
    <svg class="ico" style="left:7px;top:65px" width="17" height="17" viewBox="0 0 17 16"><path d="M3.5 0.5H11.5L15.5 4.5V15.5H3.5Z" fill="#fff" stroke="#ddd"/><ellipse cx="7" cy="8" rx="6.5" ry="4.2" fill="#3d409c"/><text x="7" y="10.2" text-anchor="middle" font-size="6.5" font-weight="bold" fill="#fff" font-family="Liberation Sans" letter-spacing="-0.3">php</text></svg>
    <span class="abs" style="left:25px;top:64.5px;font-size:13px;color:#fff;white-space:nowrap;-webkit-text-stroke:0.35px #fff">[只读] mysqli.php</span>
    <svg class="ico" style="left:131px;top:69px" width="10" height="10" viewBox="0 0 10 10"><path d="M1 1L9 9M9 1L1 9" stroke="#5f9de9" stroke-width="1.6"/></svg>
    <div class="abs" style="left:156px;top:62px;width:28px;height:28px;background:#eee;border-radius:3px 3px 0 0"></div>
    <svg class="ico" style="left:165px;top:70px" width="11" height="11" viewBox="0 0 11 11"><path d="M5.5 0.5V10.5M0.5 5.5H10.5" stroke="#777" stroke-width="1.5"/></svg>

    <!-- editor -->
    <div class="abs" style="left:0;top:89px;width:837px;height:1px;background:#e0e0e0"></div>
    <div class="abs" style="left:0;top:90px;width:49px;height:357px;background:#f5f5f5"></div>
    <div class="abs" style="left:0;top:90px;width:49px;height:17px;background:#dcdcdc"></div>
    <div class="abs" style="left:49px;top:90px;width:594px;height:17px;background:#f0f0f0"></div>
    <div class="abs" style="left:52px;top:90px;width:2px;height:17px;background:#555"></div>
    <div class="ln" style="top:90px">1</div>
    <div class="code" style="top:90px">&lt;?php</div>
    <div class="ln" style="top:107px">2</div>
    <div class="code" style="top:107px">    <span class="v">$servername</span> <span class="o">=</span> <span class="st">"localhost"</span>;</div>
    <div class="ln" style="top:124px">3</div>
    <div class="code" style="top:124px">    <span class="v">$username</span> <span class="o">=</span> <span class="st">"root"</span>;</div>
    <div class="ln" style="top:141px">4</div>
    <div class="code" style="top:141px">    <span class="v">$password</span> <span class="o">=</span> <span class="st">"123456"</span>;</div>
    <div class="ln" style="top:158px">5</div>
    <div class="ln" style="top:175px">6</div>
    <div class="code" style="top:175px">    <span class="cm">// <span class="cj">创建连接</span></span></div>
    <div class="ln" style="top:192px">7</div>
    <div class="code" style="top:192px">    <span class="v">$conn</span> <span class="o">=</span> <span class="f">mysqli_connect</span>(<span class="v">$servername</span>, <span class="v">$username</span>, <span class="v">$password</span>);</div>
    <div class="ln" style="top:209px">8</div>
    <div class="ln" style="top:226px">9</div>
    <div class="code" style="top:226px">    <span class="cm">// <span class="cj">检测连接</span></span></div>
    <div class="ln" style="top:243px">10</div>
    <div class="code" style="top:243px">    <span class="k">if</span> (<span class="o">!</span><span class="v">$conn</span>) {</div>
    <div class="ln" style="top:260px">11</div>
    <div class="code" style="top:260px">         <span class="f">die</span>(<span class="st">"Connection failed: "</span> . <span class="f">mysqli_connect_error</span>());</div>
    <div class="ln" style="top:277px">12</div>
    <div class="code" style="top:277px">    }</div>
    <div class="ln" style="top:294px">13</div>
    <div class="code" style="top:294px">    <span class="f">echo</span> <span class="st">"<span class="cj">连接</span>MySQL...<span class="cj">成功！</span>"</span>;</div>
    <div class="ln" style="top:311px">14</div>
    <div class="code" style="top:311px">?&gt;</div>
    <div class="ln" style="top:328px">15</div>
    <svg class="ico" style="left:41px;top:250px" width="6" height="4" viewBox="0 0 6 4"><path d="M0 0H6L3 3.5Z" fill="#777"/></svg>
    <div class="abs" style="left:82px;top:260px;width:0;height:17px;border-left:1px dotted #ccc"></div>
    <div class="abs" style="left:113px;top:260px;width:0;height:17px;border-left:1px dotted #ccc"></div>
    <div class="abs" style="left:638px;top:269px;width:1px;height:18px;background:#d8d8d8"></div>
    <div class="abs" style="left:640px;top:269px;width:1px;height:18px;background:#d8d8d8"></div>

    <!-- function panel -->
    <div class="abs" style="left:643px;top:90px;width:1px;height:357px;background:#dedede"></div>
    <svg class="ico" style="left:655px;top:100px" width="14" height="11" viewBox="0 0 14 11"><path d="M4 1.5L1 5.5L4 9.5M10 1.5L13 5.5L10 9.5M8.3 0.5L5.7 10.5" fill="none" stroke="#555" stroke-width="1.1"/></svg>
    <span class="abs" style="left:672px;top:95.5px;font-size:13px;color:#5e5e5e">函数列表</span>
    <svg class="ico" style="left:820px;top:99px" width="10" height="10" viewBox="0 0 10 10"><path d="M0.7 0.7L9.3 9.3M9.3 0.7L0.7 9.3" stroke="#888" stroke-width="1.3"/></svg>
    <div class="abs" style="left:650px;top:116px;width:185px;height:26px;border:1px solid #e0e0e0;border-radius:3px"></div>
    <span class="abs" style="left:655px;top:121px;font-size:13px;color:#c4c4c4">Search(ctrl+shift+e)</span>
    <span class="abs" style="left:660px;top:160px;font-size:13px;color:#999">No outline for the active view</span>

    <!-- status -->
    <div class="abs" style="left:385px;top:433px;width:239px;height:20px;background:#fff;border:1px solid #eee;border-radius:4px;box-shadow:0 0 3px rgba(0,0,0,0.06)"></div>
    <span class="abs" style="left:396px;top:438px;font-size:13px;color:#5e5e5e">0:0</span>
    <span class="abs" style="left:435px;top:438px;font-size:13px;color:#5e5e5e">PHP</span>
    <span class="abs" style="left:481px;top:438px;font-size:13px;color:#5e5e5e">UTF-8</span>
    <span class="abs" style="left:538px;top:438px;font-size:13px;color:#5e5e5e">Tabs:4</span>
    <svg class="ico" style="left:598px;top:440px" width="13" height="13" viewBox="0 0 13 13"><circle cx="6.5" cy="6.5" r="4.5" fill="#777"/><circle cx="6.5" cy="6.5" r="1.8" fill="#fff"/></svg>
  </div>
</div>
</body></html>
